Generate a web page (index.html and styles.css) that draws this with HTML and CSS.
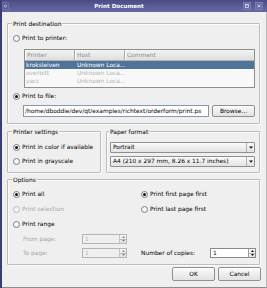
FILE: index.html
```html
<!DOCTYPE html>
<html>
<head>
<meta charset="utf-8">
<link rel="stylesheet" href="styles.css">
</head>
<body>
<div class="window">
  <div class="titlebar">
    <div class="tb-icon">
      <svg width="7" height="8" viewBox="0 0 7 8"><circle cx="3.5" cy="4" r="1.6" fill="none" stroke="#d8d9ee" stroke-width="0.9"/></svg>
    </div>
    <div class="tb-title">Print Document</div>
    <div class="tb-btns">
      <div class="tb-btn"><svg width="8" height="8" viewBox="0 0 8 8"><rect x="2" y="2" width="4" height="4" fill="none" stroke="#e6e6f4" stroke-width="0.9"/><line x1="2" y1="2.4" x2="6" y2="2.4" stroke="#e6e6f4" stroke-width="1"/></svg></div>
      <div class="tb-btn"><svg width="8" height="8" viewBox="0 0 8 8"><path d="M2.2 2.2 L5.8 5.8 M5.8 2.2 L2.2 5.8" stroke="#e6e6f4" stroke-width="1"/></svg></div>
    </div>
  </div>
  <div class="body">
    <div class="group dest">
      <div class="legend">Print destination</div>
      <div class="radio r-first"><span class="rb"></span><span>Print to printer:</span></div>
      <div class="tbl">
        <div class="th">
          <div class="hc">Printer</div>
          <div class="hc">Host</div>
          <div class="hc last">Comment</div>
        </div>
        <div class="tr sel"><div class="c">kroksleiven</div><div class="c">Unknown Loca...</div><div class="c"></div></div>
        <div class="tr dim"><div class="c">overbitt</div><div class="c">Unknown Loca...</div><div class="c"></div></div>
        <div class="tr dim"><div class="c">yacc</div><div class="c">Unknown Loca...</div><div class="c"></div></div>
      </div>
      <div class="radio r-file"><span class="rb on"></span><span>Print to file:</span></div>
      <div class="filerow">
        <div class="lineedit">/home/dboddie/dev/qt/examples/richtext/orderform/print.ps</div>
        <div class="btn browse">Browse...</div>
      </div>
    </div>

    <div class="row2">
      <div class="group psettings">
        <div class="legend">Printer settings</div>
        <div class="radio r-c1"><span class="rb on"></span><span>Print in color if available</span></div>
        <div class="radio r-c2"><span class="rb"></span><span>Print in grayscale</span></div>
      </div>
      <div class="group paper">
        <div class="legend">Paper format</div>
        <div class="combo c1"><span class="ctext">Portrait</span><span class="carrow"><svg width="4" height="3" viewBox="0 0 4 3"><path d="M0 0.5 H4 L2 2.7 Z" fill="#111"/></svg></span></div>
        <div class="combo c2"><span class="ctext">A4 (210 x 297 mm, 8.26 x 11.7 inches)</span><span class="carrow"><svg width="4" height="3" viewBox="0 0 4 3"><path d="M0 0.5 H4 L2 2.7 Z" fill="#111"/></svg></span></div>
      </div>
    </div>

    <div class="group options">
      <div class="legend">Options</div>
      <div class="ogrid">
        <div class="ocol left">
          <div class="radio o1"><span class="rb on"></span><span>Print all</span></div>
          <div class="radio o2 disabled"><span class="rb"></span><span>Print selection</span></div>
          <div class="radio o3"><span class="rb"></span><span>Print range</span></div>
          <div class="prow from"><span class="plabel">From page:</span>
            <div class="spin off"><span class="stext">1</span><span class="sbtns"><span class="sup"><svg width="3" height="2" viewBox="0 0 3 2"><path d="M0 2 H3 L1.5 0 Z" fill="#888"/></svg></span><span class="sdn"><svg width="3" height="2" viewBox="0 0 3 2"><path d="M0 0 H3 L1.5 2 Z" fill="#888"/></svg></span></span></div>
          </div>
          <div class="prow to"><span class="plabel">To page:</span>
            <div class="spin off"><span class="stext">1</span><span class="sbtns"><span class="sup"><svg width="3" height="2" viewBox="0 0 3 2"><path d="M0 2 H3 L1.5 0 Z" fill="#888"/></svg></span><span class="sdn"><svg width="3" height="2" viewBox="0 0 3 2"><path d="M0 0 H3 L1.5 2 Z" fill="#888"/></svg></span></span></div>
          </div>
        </div>
        <div class="ocol right">
          <div class="radio o1"><span class="rb on"></span><span>Print first page first</span></div>
          <div class="radio o2"><span class="rb"></span><span>Print last page first</span></div>
          <div class="crow"><span class="clabel">Number of copies:</span>
            <div class="spin"><span class="stext">1</span><span class="sbtns"><span class="sup"><svg width="3" height="2" viewBox="0 0 3 2"><path d="M0 2 H3 L1.5 0 Z" fill="#111"/></svg></span><span class="sdn"><svg width="3" height="2" viewBox="0 0 3 2"><path d="M0 0 H3 L1.5 2 Z" fill="#111"/></svg></span></span></div>
          </div>
        </div>
      </div>
    </div>

    <div class="buttons">
      <div class="btn">OK</div>
      <div class="btn">Cancel</div>
    </div>
  </div>
</div>
</body>
</html>
```

FILE: styles.css
```css
* { box-sizing: border-box; }
html, body { margin: 0; padding: 0; }
body {
  width: 267px;
  height: 288px;
  overflow: hidden;
  font-family: "DejaVu Sans", sans-serif;
  font-size: 5.9px;
  color: #000;
  background: #efefef;
}
.window {
  width: 267px;
  height: 288px;
  display: flex;
  flex-direction: column;
  border-left: 2px solid #3a3c76;
}
.titlebar {
  height: 12px;
  flex: none;
  display: flex;
  align-items: center;
  background: linear-gradient(#4a4c86, #5c5e9a 60%, #6668a3);
  color: #fff;
  padding-right: 4px;
}
.tb-icon {
  width: 7px;
  height: 8px;
  border: 1px solid #6d6fa6;
  background: #5a5c96;
  display: flex;
  align-items: center;
  justify-content: center;
}
.tb-icon svg { display: block; }
.tb-title {
  flex: 1;
  text-align: center;
  font-weight: bold;
  font-size: 5.6px;
  line-height: 8px;
  padding-right: 14px;
}
.tb-btns { display: flex; gap: 4px; }
.tb-btn {
  width: 8px;
  height: 8px;
  border: 1px solid #7a7cb0;
  background: #6a6ca6;
  display: flex;
  align-items: center;
  justify-content: center;
}
.tb-btn svg { display: block; }

.body {
  flex: 1;
  padding: 11px 6px 0 5px;
  border-right: 1px solid #b8b8b8;
  border-bottom: 1px solid #8c8c8c;
  display: flex;
  flex-direction: column;
}

.group {
  border: 1px solid #bdbdbd;
  box-shadow: inset 1px 1px 0 #fbfbfb, 1px 1px 0 #fbfbfb;
  border-radius: 1px;
  padding: 0 4px 6px 5px;
}
.legend {
  margin: -4px 0 0 -1px;
  padding: 0 1px;
  background: #efefef;
  line-height: 8px;
  height: 8px;
  width: max-content;
}

.radio {
  display: flex;
  align-items: center;
  gap: 2px;
  height: 8px;
  line-height: 8px;
  white-space: nowrap;
}
.rb {
  width: 7px;
  height: 7px;
  border-radius: 50%;
  border: 1px solid #808080;
  background: radial-gradient(circle at 40% 40%, #ffffff, #e8e8e8);
  display: flex;
  align-items: center;
  justify-content: center;
  flex: none;
}
.rb.on::after {
  content: "";
  width: 3px;
  height: 3px;
  border-radius: 50%;
  background: #111;
}
.disabled { color: #a9a9a9; }
.disabled .rb { border-color: #bcbcbc; background: #f2f2f2; }

.r-first { margin-top: 6px; }
.tbl {
  margin: 7px 0 0 11px;
  height: 39px;
  border: 1px solid #8e8e8e;
  background: #f8f8f8;
  overflow: hidden;
}
.th {
  display: grid;
  grid-template-columns: 50px 50px 1fr;
  height: 11px;
  background: linear-gradient(#f4f4f4, #dedede);
  border-bottom: 1px solid #b4b4b4;
}
.hc {
  color: #8f8f8f;
  line-height: 10px;
  padding-left: 2px;
  border-right: 1px solid #a9a9a9;
  box-shadow: inset 1px 0 0 #ffffff;
}
.hc.last { border-right: none; }
.tr {
  display: grid;
  grid-template-columns: 50px 50px 1fr;
  height: 8px;
  line-height: 8px;
}
.c {
  white-space: nowrap;
  overflow: hidden;
  padding-left: 2px;
}
.tr .c:first-child { padding-left: 1px; }
.tr.sel { background: #50739a; color: #fff; }
.tr.dim { color: #b4b4b4; }

.r-file { margin-top: 4px; }
.filerow {
  display: flex;
  gap: 3px;
  margin: 5px 0 0 10px;
  height: 12px;
}
.lineedit {
  flex: 1;
  background: #fff;
  border: 1px solid #8598b3;
  line-height: 10px;
  padding-left: 1px;
  white-space: nowrap;
  overflow: hidden;
}
.btn {
  width: 43px;
  height: 14px;
  border: 1px solid #909090;
  border-radius: 2px;
  background: linear-gradient(#fbfbfb, #e2e2e2);
  box-shadow: inset 0 1px 0 #ffffff;
  text-align: center;
  line-height: 12px;
}
.browse { height: 12px; line-height: 10px; }

.row2 {
  display: flex;
  gap: 5px;
  margin-top: 7px;
}
.psettings { width: 94px; padding-bottom: 7px; }
.r-c1 { margin-top: 7px; }
.r-c2 { margin-top: 6px; }
.paper { flex: 1; padding: 0 4px 5px 3px; }
.combo {
  height: 11px;
  border: 1px solid #8f8f8f;
  border-radius: 1px;
  background: linear-gradient(#fafafa, #e3e3e3);
  display: flex;
  align-items: center;
}
.combo.c1 { margin-top: 6px; }
.combo.c2 { margin-top: 3px; }
.ctext { flex: 1; padding-left: 2px; white-space: nowrap; overflow: hidden; line-height: 9px; }
.carrow {
  width: 8px;
  height: 100%;
  border-left: 1px solid #b0b0b0;
  display: flex;
  align-items: center;
  justify-content: center;
}
.carrow svg { display: block; }

.options { margin-top: 6px; padding-right: 3px; }
.ogrid {
  display: grid;
  grid-template-columns: 128px 1fr;
  margin-top: 6px;
}
.ocol { display: flex; flex-direction: column; }
.o2 { margin-top: 7px; }
.o3 { margin-top: 7px; }
.prow {
  display: flex;
  align-items: center;
  height: 10px;
  margin-left: 10px;
  color: #a6a6a6;
}
.prow.from { margin-top: 6px; }
.prow.to { margin-top: 4px; }
.plabel { width: 59px; white-space: nowrap; }
.crow {
  margin-top: auto;
  display: flex;
  align-items: center;
  height: 10px;
}
.clabel { width: 69px; white-space: nowrap; }
.spin {
  width: 45px;
  height: 10px;
  border: 1px solid #8a8a8a;
  background: #fff;
  display: flex;
}
.crow .spin { width: 46px; }
.spin.off { background: #efefef; border-color: #b5b5b5; color: #b5b5b5; }
.stext { flex: 1; padding-left: 2px; line-height: 8px; }
.sbtns {
  width: 7px;
  display: flex;
  flex-direction: column;
  border-left: 1px solid #a0a0a0;
  background: linear-gradient(#f8f8f8, #e2e2e2);
}
.spin.off .sbtns { border-left-color: #c4c4c4; }
.sup, .sdn {
  flex: 1;
  display: flex;
  align-items: center;
  justify-content: center;
}
.sup { border-bottom: 1px solid #b8b8b8; }
.sup svg, .sdn svg { display: block; }

.buttons {
  display: flex;
  justify-content: flex-end;
  gap: 3px;
  margin: 2px -1px 0 0;
}
```
